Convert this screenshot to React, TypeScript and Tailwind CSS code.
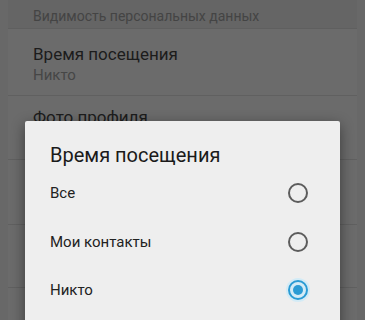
import React from "react";

function Radio({ checked }: { checked?: boolean }) {
  if (checked) {
    return (
      <div className="w-[24px] h-[24px] rounded-full bg-[#d3ebf6] flex items-center justify-center">
        <div className="w-[20px] h-[20px] rounded-full border-2 border-[#2a9bd4] flex items-center justify-center">
          <div className="w-[10px] h-[10px] rounded-full bg-[#2a9bd4]" />
        </div>
      </div>
    );
  }
  return (
    <div className="w-[24px] h-[24px] flex items-center justify-center">
      <div className="w-[20px] h-[20px] rounded-full border-2 border-[#5c5c5c]" />
    </div>
  );
}

export default function App() {
  const options = [
    { label: "Все", checked: false },
    { label: "Мои контакты", checked: false },
    { label: "Никто", checked: true },
  ];
  return (
    <div
      className="relative w-[365px] h-[320px] overflow-hidden bg-[#686868]"
      style={{ fontFamily: "Roboto, 'Noto Sans', sans-serif" }}
    >
      {/* background list */}
      <div className="mx-[8px] h-full bg-[#6b6b6b]">
        <div className="h-[29px] bg-[#656565] border-b border-[#5f5f5f] pl-[25px] pt-[4px] flex items-center">
          <span className="text-[14px] text-[#444444] leading-none">Видимость персональных данных</span>
        </div>
        <div className="h-[67px] border-b border-[#606060] pl-[25px] pt-[4px] flex flex-col justify-center">
          <span className="text-[17px] text-[#1c1c1c] leading-[22px]">Время посещения</span>
          <span className="text-[15px] text-[#464646] leading-[20px]">Никто</span>
        </div>
        <div className="h-[64px] border-b border-[#606060] pl-[25px] pt-[10px]">
          <span className="text-[17px] text-[#1c1c1c] leading-[22px]">Фото профиля</span>
        </div>
        <div className="h-[65px] border-b border-[#606060]" />
        <div className="h-[63px] border-b border-[#606060]" />
      </div>

      {/* dialog */}
      <div className="absolute left-[25px] top-[121px] w-[315px] h-[220px] bg-[#eeeeee] rounded-[2px] shadow-[0_4px_14px_rgba(0,0,0,0.45)]">
        <div className="pl-[25px] pt-[21px] text-[20px] leading-[26px] text-[#1a1a1a]">
          Время посещения
        </div>
        <div className="mt-[1px]">
          {options.map((o) => (
            <div key={o.label} className="h-[48.5px] flex items-center justify-between pl-[25px] pr-[30px]">
              <span className="text-[15px] text-[#222222]">{o.label}</span>
              <Radio checked={o.checked} />
            </div>
          ))}
        </div>
      </div>
    </div>
  );
}
